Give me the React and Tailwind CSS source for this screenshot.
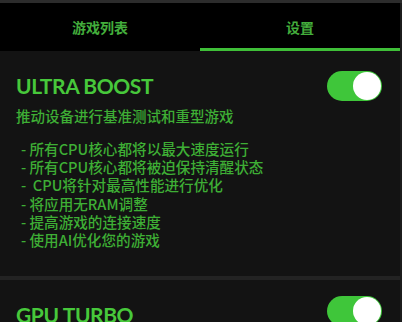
import { useState } from 'react'

const features = [
  '- 所有CPU核心都将以最大速度运行',
  '- 所有CPU核心都将被迫保持清醒状态',
  '-  CPU将针对最高性能进行优化',
  '- 将应用无RAM调整',
  '- 提高游戏的连接速度',
  '- 使用AI优化您的游戏',
]

const cjk = { fontFamily: '"Noto Sans CJK SC", "Noto Sans", sans-serif' }
const latin = { fontFamily: 'Lato, "Noto Sans CJK SC", sans-serif' }

function Toggle({ on, onChange }) {
  return (
    <button
      onClick={() => onChange(!on)}
      className={`relative w-[55px] h-[30px] rounded-full shrink-0 ${on ? 'bg-[#3fc63a]' : 'bg-[#444]'}`}
    >
      <span
        className={`absolute top-[1px] w-[28px] h-[28px] rounded-full bg-white ${on ? 'right-[1px]' : 'left-[1px]'}`}
      />
    </button>
  )
}

export default function App() {
  const [tab, setTab] = useState(1)
  const [ultra, setUltra] = useState(true)
  const [gpu, setGpu] = useState(true)

  return (
    <div className="w-[402px] h-[322px] overflow-hidden bg-[#1c1c1c] flex flex-col" style={cjk}>
      <div className="h-[3px] bg-[#2c2c2c] shrink-0" />
      <div className="w-[400px] flex-1 bg-[#131313] flex flex-col">
        {/* tabs */}
        <div className="flex bg-black h-[48px] shrink-0">
          {['游戏列表', '设置'].map((t, i) => (
            <button
              key={t}
              onClick={() => setTab(i)}
              className="flex-1 flex flex-col"
            >
              <span className="flex-1 flex items-center justify-center pt-[4px] text-[14px] font-bold text-[#43ad3c]">{t}</span>
              <span className={`h-[3px] w-full ${tab === i ? 'bg-[#3fbf38]' : 'bg-transparent'}`} />
            </button>
          ))}
        </div>

        {/* ultra boost */}
        <div className="px-4 pt-[20px] pb-[27px]">
          <div className="flex items-center justify-between pr-[2px]">
            <h2 className="text-[21px] font-bold text-[#47c83b] leading-none tracking-[-0.4px] -mt-[1px]" style={latin}>ULTRA BOOST</h2>
            <Toggle on={ultra} onChange={setUltra} />
          </div>
          <p className="mt-[5px] text-[14.5px] leading-[20px] font-medium text-[#3eae35]">推动设备进行基准测试和重型游戏</p>
          <ul className="mt-[14px] pl-[5px]">
            {features.map((f) => (
              <li key={f} className="text-[14.6px] leading-[18.2px] font-medium text-[#3eae35] whitespace-pre">{f}</li>
            ))}
          </ul>
        </div>

        <div className="h-[4px] bg-[#232323] shrink-0" />

        {/* gpu turbo */}
        <div className="px-4 pt-[16px]">
          <div className="flex items-center justify-between pr-[2px]">
            <h2 className="text-[21px] font-bold text-[#47c83b] leading-none tracking-[-0.4px] mt-[7px]" style={latin}>GPU TURBO</h2>
            <Toggle on={gpu} onChange={setGpu} />
          </div>
        </div>
      </div>
    </div>
  )
}
